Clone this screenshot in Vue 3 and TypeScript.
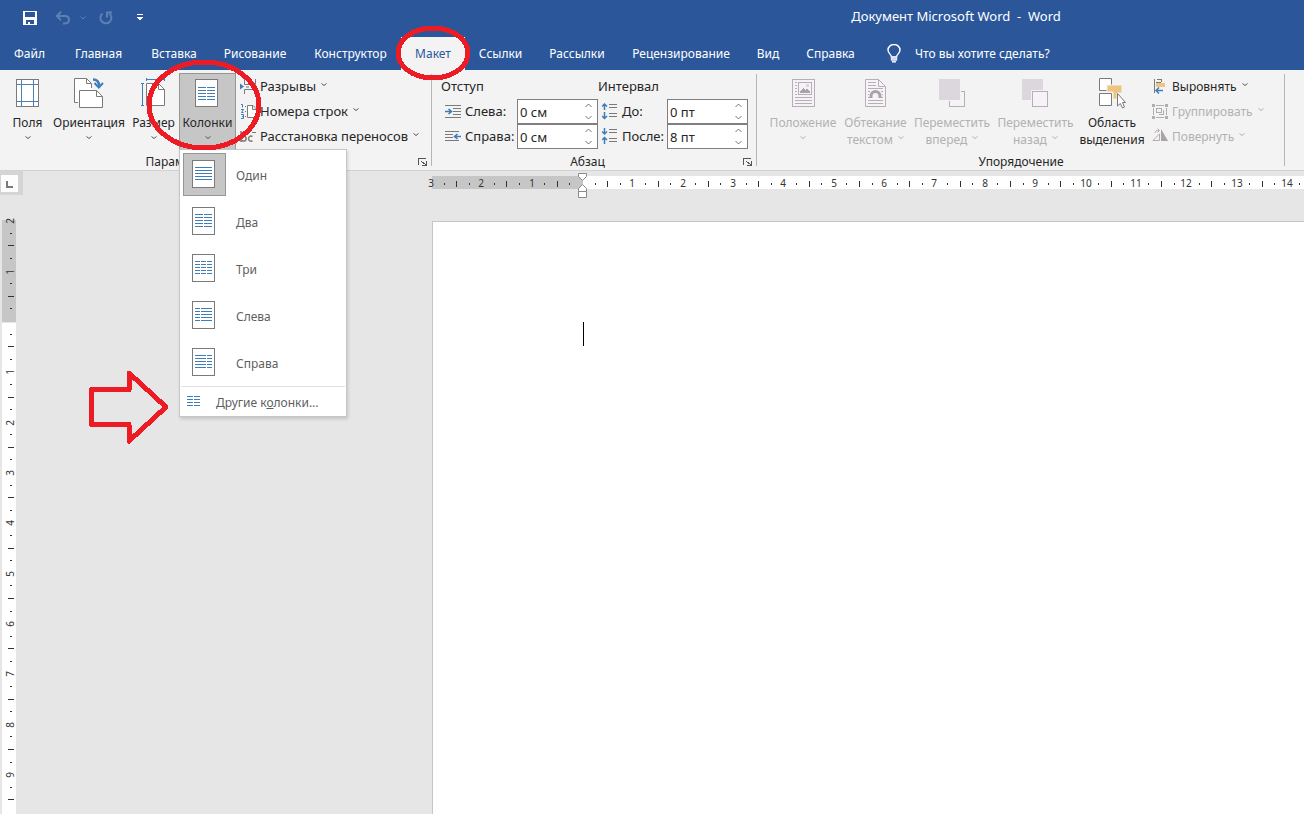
<script setup lang="ts">
import { ref } from 'vue'

interface ColumnOption {
  label: string
  spans: [number, number][]
}

const tabs: string[] = [
  'Файл', 'Главная', 'Вставка', 'Рисование', 'Конструктор', 'Макет',
  'Ссылки', 'Рассылки', 'Рецензирование', 'Вид', 'Справка',
]
const activeTab = ref('Макет')

const columnOptions: ColumnOption[] = [
  { label: 'Один', spans: [[3, 20]] },
  { label: 'Два', spans: [[3, 11], [12, 20]] },
  { label: 'Три', spans: [[3, 8], [9, 14], [15, 20]] },
  { label: 'Слева', spans: [[3, 8], [9, 20]] },
  { label: 'Справа', spans: [[3, 14], [15, 20]] },
]
const selectedColumns = ref('Один')

const indentLeft = ref('0 см')
const indentRight = ref('0 см')
const spaceBefore = ref('0 пт')
const spaceAfter = ref('8 пт')

function step(value: string, delta: number): string {
  const [amount, unit] = value.split(' ')
  return `${Math.max(0, Number(amount) + delta)} ${unit}`
}

function columnLines(spans: [number, number][], top: number): string {
  const rows = [0, 3, 6, 9, 12]
  return rows
    .map((r) => spans.map(([a, b]) => `M${a} ${top + r + 0.5}H${b}`).join(''))
    .join('')
}

// One centimetre on the rulers, in pixels
const CM = 50.35
// Where the text area begins, from the window's left and top edges
const ORIGIN_X = 582
const ORIGIN_Y = 322

interface Mark {
  pos: number
  kind: 'number' | 'half' | 'dot'
  text: string
}

function marks(from: number, length: number): Mark[] {
  const list: Mark[] = []
  for (let q = from * 4; (q / 4) * CM < length - 2; q++) {
    if (q === 0) continue
    const pos = Math.round((q / 4) * CM)
    const kind = q % 4 === 0 ? 'number' : q % 2 === 0 ? 'half' : 'dot'
    list.push({ pos, kind, text: String(Math.abs(q / 4)) })
  }
  return list
}

const horizontalMarks = marks(-3, window.innerWidth - ORIGIN_X)
const verticalMarks = marks(-2, window.innerHeight - ORIGIN_Y)
</script>

<template>
  <div class="word">
    <header class="titlebar">
      <div class="quick">
        <button type="button" class="q save" aria-label="Сохранить">
          <svg width="14" height="14" viewBox="0 0 14 14" shape-rendering="crispEdges">
            <path d="M0 0H14V14H0zM2 1V6H12V1zM3 9V13H5V11H7V13H11V9z" fill="#fff" fill-rule="evenodd" />
          </svg>
        </button>
        <button type="button" class="q undo" aria-label="Отменить">
          <svg width="16" height="14" viewBox="0 0 16 14" fill="none" stroke="#5d80b5" stroke-width="2">
            <path d="M2 5H10C13 5 14 7 14 9S12.500 12.500 9 12.500H8M6 .8L1.800 5L6 9.200" />
          </svg>
        </button>
        <button type="button" class="q more" aria-label="Список отмены">
          <svg width="6" height="4" viewBox="0 0 6 4" fill="none" stroke="#5d80b5"><path d="M.5 .5L3 3L5.500 .5" /></svg>
        </button>
        <button type="button" class="q redo" aria-label="Повторить">
          <svg width="14" height="14" viewBox="0 0 14 14" fill="none" stroke="#5d80b5" stroke-width="2">
            <path d="M3.500 2.500A5.500 5.500 0 1 0 10.500 2.700M8 6.500V1.500H13" />
          </svg>
        </button>
        <button type="button" class="q custom" aria-label="Настройка панели">
          <svg width="6" height="7" viewBox="0 0 6 7" shape-rendering="crispEdges">
            <path d="M0 0H6V1H0zM0 3H6V4H5V5H4V6H2V5H1V4H0z" fill="#fff" />
          </svg>
        </button>
      </div>
      <div class="title">Документ Microsoft Word&nbsp; -&nbsp; Word</div>
    </header>

    <nav class="tabs">
      <button
        v-for="tab in tabs"
        :key="tab"
        type="button"
        class="tab"
        :class="{ active: tab === activeTab }"
        @click="activeTab = tab"
      >{{ tab }}</button>
      <button type="button" class="tell">
        <svg width="14" height="19" viewBox="0 0 14 19" fill="none" stroke="#fff" stroke-width="1.400">
          <path d="M4.500 13C4.500 10.500 1 9.500 1 6A6 5.500 0 0 1 13 6C13 9.500 9.500 10.500 9.500 13z" />
          <path d="M4.500 13H9.500V16H4.500z" fill="#c9d5e8" stroke="#dfe7f2" />
          <path d="M5 17.800H9" />
        </svg>
        Что вы хотите сделать?
      </button>
    </nav>

    <section class="ribbon">
      <div class="group page-setup">
        <div class="body">
          <button type="button" class="big">
            <svg class="pic" width="23" height="30" viewBox="0 0 23 30" fill="none" shape-rendering="crispEdges">
              <path d="M.5 1.500H22.500V28.500H.5z" fill="#fff" stroke="#7a7a7a" />
              <path d="M5.500 2V28M17.500 2V28M1 6.500H22M1 23.500H22" stroke="#4a80b8" />
            </svg>
            <span>Поля</span><svg class="chev" viewBox="0 0 6 4"><path d="M.5 .5L3 2.500L5.500 .5" /></svg>
          </button>
          <button type="button" class="big">
            <svg class="pic" width="30" height="31" viewBox="0 0 30 31" fill="none" stroke="#7a7a7a">
              <path d="M4 24.500H.5V.5H12.500L17.500 5.500V12.500H5.500V24.500z" fill="#fff" stroke="none" />
              <path d="M4 24.500H.5V.5H12.500L17.500 5.500V10M12.500 .5V5.500H17.500" />
              <path d="M5.500 12.500H22.500L28.500 18.500V29.500H5.500z" fill="#fff" />
              <path d="M22.500 12.500V18.500H28.500" />
              <path d="M19 1.500C23 1.500 25 4 25 8" stroke="#3f7cba" stroke-width="2.500" />
              <path d="M20.500 5L24.800 9.500L29 5" stroke="#3f7cba" stroke-width="2" />
            </svg>
            <span>Ориентация</span><svg class="chev" viewBox="0 0 6 4"><path d="M.5 .5L3 2.500L5.500 .5" /></svg>
          </button>
          <button type="button" class="big size">
            <svg class="pic" width="25" height="30" viewBox="0 0 25 30" fill="none">
              <path d="M5.500 5.500H17.500L23.500 11.500V27.500H5.500z" fill="#fff" stroke="#7a7a7a" />
              <path d="M17.500 5.500V11.500H23.500" stroke="#7a7a7a" />
              <path d="M5.500 0V3M23.500 0V3M5 1.500H24M0 5.500H3M0 27.500H3M1.500 5V28" stroke="#3f7cba" />
            </svg>
            <span>Размер</span><svg class="chev" viewBox="0 0 6 4"><path d="M.5 .5L3 2.500L5.500 .5" /></svg>
          </button>
          <div class="drop">
            <button type="button" class="big open" aria-haspopup="true" aria-expanded="true">
              <svg class="pic" width="23" height="30" viewBox="0 0 23 30" fill="none" shape-rendering="crispEdges">
                <path d="M.5 1.500H22.500V28.500H.5z" fill="#fff" stroke="#7a7a7a" />
                <path :d="columnLines([[3, 11], [12, 20]], 9)" stroke="#3f7cba" />
              </svg>
              <span>Колонки</span><svg class="chev" viewBox="0 0 6 4"><path d="M.5 .5L3 2.500L5.500 .5" /></svg>
            </button>
            <div class="menu">
              <button
                v-for="option in columnOptions"
                :key="option.label"
                type="button"
                class="option"
                :class="{ selected: option.label === selectedColumns }"
                @click="selectedColumns = option.label"
              >
                <span class="thumb">
                  <svg width="23" height="28" viewBox="0 0 23 28" fill="none" shape-rendering="crispEdges">
                    <path d="M.5 .5H22.500V27.500H.5z" fill="#fff" stroke="#7a7a7a" />
                    <path :d="columnLines(option.spans, 7)" stroke="#3f7cba" />
                  </svg>
                </span>
                {{ option.label }}
              </button>
              <button type="button" class="option-more">
                <svg width="13" height="11" viewBox="0 0 13 11" shape-rendering="crispEdges" stroke="#3f7cba">
                  <path d="M0 .5H6M7 .5H13M0 3.500H6M7 3.500H13M0 6.500H6M7 6.500H13M0 9.500H6M7 9.500H13" />
                </svg>
                <span>Другие к<u>о</u>лонки...</span>
              </button>
            </div>
          </div>
          <div class="stack">
            <button type="button" class="small">
              <svg width="17" height="17" viewBox="0 0 17 17" fill="none" stroke="#7a7a7a">
                <path d="M4.500 1V6.500H15.500V1M4.500 16V11.500H15.500V16M6 9H9M11 9H14" />
                <path d="M0 5.500L4 8.500L0 11.500z" fill="#3f7cba" stroke="none" />
              </svg>
              Разрывы<svg class="chev" viewBox="0 0 6 4"><path d="M.5 .5L3 2.500L5.500 .5" /></svg>
            </button>
            <button type="button" class="small">
              <svg width="17" height="17" viewBox="0 0 17 17" fill="none">
                <path d="M1 1.500H2.500V4.500M1 6.500H3.500L1.500 9.500H3.500M1 11.500H3.500V15.500H1M2 13.500H3.500" stroke="#3f7cba" />
                <path d="M5 3.500H6M5 8.500H6M5 13.500H6" stroke="#7a7a7a" />
                <path d="M7.500 2.500H13L16.500 6V14.500H7.500zM12.500 2.500V6.500H16.500" fill="#fff" stroke="#7a7a7a" />
              </svg>
              Номера строк<svg class="chev" viewBox="0 0 6 4"><path d="M.5 .5L3 2.500L5.500 .5" /></svg>
            </button>
            <button type="button" class="small">
              <svg width="17" height="17" viewBox="0 0 17 17" fill="none" stroke="#7a7a7a">
                <path d="M1 3V14" stroke-width="1.500" />
                <circle cx="3.500" cy="10.500" r="2.600" stroke-width="1.500" />
                <path d="M12.500 8.500C10 7.300 8.500 9 8.500 10.700S10.500 14 12.500 12.700" stroke-width="1.500" />
                <path d="M12 4.500H16" />
              </svg>
              Расстановка переносов<svg class="chev" viewBox="0 0 6 4"><path d="M.5 .5L3 2.500L5.500 .5" /></svg>
            </button>
          </div>
        </div>
        <div class="caption">
          <span>Параметры страницы</span>
          <button type="button" class="launch" aria-label="Параметры страницы">
            <svg width="9" height="8" viewBox="0 0 9 8" fill="none" stroke="#555" shape-rendering="crispEdges">
              <path d="M.5 7V.5H8M8.500 3V7.500H4M3 3L8 7" />
            </svg>
          </button>
        </div>
      </div>

      <div class="group paragraph">
        <div class="body">
          <div class="fields left">
            <div class="heading">Отступ</div>
            <svg width="17" height="14" viewBox="0 0 17 14" fill="none" stroke="#7a7a7a">
              <path d="M0 .5H16M8 3.500H16M8 6.500H16M8 9.500H16M0 12.500H16" />
              <path d="M0 6.500H6M3.500 4L6.500 6.500L3.500 9" stroke="#3f7cba" stroke-width="1.600" />
            </svg>
            <label for="indent-left">Слева:</label>
            <div class="spin">
              <input id="indent-left" v-model="indentLeft" type="text" />
              <div class="arrows">
                <button type="button" aria-label="Больше" @click="indentLeft = step(indentLeft, 1)"><svg width="7" height="5" viewBox="0 0 7 5"><path d="M.5 4L3.500 1L6.500 4" /></svg></button>
                <button type="button" aria-label="Меньше" @click="indentLeft = step(indentLeft, -1)"><svg width="7" height="5" viewBox="0 0 7 5"><path d="M.5 1L3.500 4L6.500 1" /></svg></button>
              </div>
            </div>
            <svg width="17" height="14" viewBox="0 0 17 14" fill="none" stroke="#7a7a7a">
              <path d="M0 1.500H14M0 4.500H8M0 7.500H8M0 10.500H14" />
              <path d="M16 6.500H10M12.500 4L9.500 6.500L12.500 9" stroke="#3f7cba" stroke-width="1.600" />
            </svg>
            <label for="indent-right">Справа:</label>
            <div class="spin">
              <input id="indent-right" v-model="indentRight" type="text" />
              <div class="arrows">
                <button type="button" aria-label="Больше" @click="indentRight = step(indentRight, 1)"><svg width="7" height="5" viewBox="0 0 7 5"><path d="M.5 4L3.500 1L6.500 4" /></svg></button>
                <button type="button" aria-label="Меньше" @click="indentRight = step(indentRight, -1)"><svg width="7" height="5" viewBox="0 0 7 5"><path d="M.5 1L3.500 4L6.500 1" /></svg></button>
              </div>
            </div>
          </div>
          <div class="fields right">
            <div class="heading">Интервал</div>
            <svg width="17" height="17" viewBox="0 0 17 17" fill="none" stroke="#7a7a7a">
              <path d="M7 1.500H15M7 4.500H15M7 10.500H15M7 13.500H15" />
              <path d="M2.500 1V7M0 3.500L2.500 1L5 3.500M2.500 9V15.500M0 13L2.500 15.500L5 13" stroke="#3f7cba" stroke-width="1.500" />
            </svg>
            <label for="space-before">До:</label>
            <div class="spin">
              <input id="space-before" v-model="spaceBefore" type="text" />
              <div class="arrows">
                <button type="button" aria-label="Больше" @click="spaceBefore = step(spaceBefore, 1)"><svg width="7" height="5" viewBox="0 0 7 5"><path d="M.5 4L3.500 1L6.500 4" /></svg></button>
                <button type="button" aria-label="Меньше" @click="spaceBefore = step(spaceBefore, -1)"><svg width="7" height="5" viewBox="0 0 7 5"><path d="M.5 1L3.500 4L6.500 1" /></svg></button>
              </div>
            </div>
            <svg width="17" height="17" viewBox="0 0 17 17" fill="none" stroke="#7a7a7a">
              <path d="M7 1.500H15M7 4.500H15M7 10.500H15M7 13.500H15" />
              <path d="M2.500 0V6M0 3.500L2.500 6L5 3.500M2.500 9.500V16M0 12L2.500 9.500L5 12" stroke="#3f7cba" stroke-width="1.500" />
            </svg>
            <label for="space-after">После:</label>
            <div class="spin">
              <input id="space-after" v-model="spaceAfter" type="text" />
              <div class="arrows">
                <button type="button" aria-label="Больше" @click="spaceAfter = step(spaceAfter, 1)"><svg width="7" height="5" viewBox="0 0 7 5"><path d="M.5 4L3.500 1L6.500 4" /></svg></button>
                <button type="button" aria-label="Меньше" @click="spaceAfter = step(spaceAfter, -1)"><svg width="7" height="5" viewBox="0 0 7 5"><path d="M.5 1L3.500 4L6.500 1" /></svg></button>
              </div>
            </div>
          </div>
        </div>
        <div class="caption">
          <span>Абзац</span>
          <button type="button" class="launch" aria-label="Абзац">
            <svg width="9" height="8" viewBox="0 0 9 8" fill="none" stroke="#555" shape-rendering="crispEdges">
              <path d="M.5 7V.5H8M8.500 3V7.500H4M3 3L8 7" />
            </svg>
          </button>
        </div>
      </div>

      <div class="group arrange">
        <div class="body">
          <button type="button" class="big" disabled>
            <svg class="pic" width="23" height="30" viewBox="0 0 23 30" fill="none" stroke="#b4b0b4" shape-rendering="crispEdges">
              <path d="M.5 1.500H22.500V28.500H.5z" fill="#f7f1f8" />
              <path d="M6.500 4.500H19.500V16.500H6.500z" fill="#f7f1f8" />
              <path d="M3 4.500H5M3 7.500H5M3 10.500H5M3 13.500H5M3 16.500H5M3 19.500H20M3 22.500H20M3 25.500H20" />
              <path d="M8 15V13L11 10L13 12L15 11L18 14V15z" fill="#a7a3a7" stroke="none" />
              <path d="M14 6H17V9H14z" fill="#dcd7dc" stroke="none" />
            </svg>
            <span>Положение</span><svg class="chev" viewBox="0 0 6 4"><path d="M.5 .5L3 2.500L5.500 .5" /></svg>
          </button>
          <button type="button" class="big" disabled>
            <svg class="pic" width="21" height="30" viewBox="0 0 21 30" fill="none" stroke="#b4b0b4">
              <path d="M.5 1.500H13.500L20.500 8.500V28.500H.5z" fill="#f7f1f8" />
              <path d="M13.500 1.500V8.500H20.500M3 4.500H11M3 7.500H11M3 10.500H18M3 13.500H5M16 13.500H18M3 16.500H4M17 16.500H18M3 19.500H5M16 19.500H18M3 22.500H18M3 25.500H18" />
              <path d="M6 20V18A4.500 4.500 0 0 1 15 18V20" stroke="#a7a3a7" stroke-width="3" />
            </svg>
            <span>Обтекание<br />текстом <svg class="chev" viewBox="0 0 6 4"><path d="M.5 .5L3 2.500L5.500 .5" /></svg></span>
          </button>
          <button type="button" class="big" disabled>
            <svg class="pic" width="27" height="30" viewBox="0 0 27 30" fill="none" shape-rendering="crispEdges">
              <path d="M10.500 13.500H25.500V28.500H10.500z" fill="#f7f1f8" stroke="#b4b0b4" />
              <path d="M0 1H22V23H0z" fill="#f3f3f3" /><path d="M0 1H21V22H0z" fill="#dcd7dc" />
            </svg>
            <span>Переместить<br />вперед <svg class="chev" viewBox="0 0 6 4"><path d="M.5 .5L3 2.500L5.500 .5" /></svg></span>
          </button>
          <button type="button" class="big" disabled>
            <svg class="pic" width="27" height="30" viewBox="0 0 27 30" fill="none" shape-rendering="crispEdges">
              <path d="M0 1H21V22H0z" fill="#dcd7dc" />
              <path d="M9 12H27V30H9z" fill="#f3f3f3" />
              <path d="M10.500 13.500H25.500V28.500H10.500z" fill="#f7f1f8" stroke="#b4b0b4" />
            </svg>
            <span>Переместить<br />назад <svg class="chev" viewBox="0 0 6 4"><path d="M.5 .5L3 2.500L5.500 .5" /></svg></span>
          </button>
          <button type="button" class="big">
            <svg class="pic" width="27" height="31" viewBox="0 0 27 31" fill="none" stroke="#7a7a7a">
              <path d="M.5 .5H12.500V12.500H.5zM.5 15.500H12.500V27.500H.5z" fill="#fff" />
              <path d="M8 7H23V15H18V21H14V14H8z" fill="#edc57e" stroke="#f3f3f3" />
              <path d="M18.500 15.500V28L21.300 25.500L23.500 30L25.500 29L23.500 24.500H26.500z" fill="#fff" />
            </svg>
            <span>Область<br />выделения</span>
          </button>
          <div class="stack">
            <button type="button" class="small">
              <svg width="17" height="17" viewBox="0 0 17 17" fill="none" shape-rendering="crispEdges">
                <path d="M2.500 1V15M4.500 1.500H9.500V4" stroke="#7a7a7a" />
                <path d="M4 4.500H9" stroke="#7a7a7a" /><path d="M4 5H13V9H4z" fill="#edc57e" />
                <path d="M4 12.500H11M7 9.500L4 12.500L7 15.500" stroke="#3f7cba" stroke-width="1.500" shape-rendering="auto" />
              </svg>
              Выровнять<svg class="chev" viewBox="0 0 6 4"><path d="M.5 .5L3 2.500L5.500 .5" /></svg>
            </button>
            <button type="button" class="small" disabled>
              <svg width="17" height="17" viewBox="0 0 17 17" fill="none" stroke="#b1adb1" shape-rendering="crispEdges">
                <path d="M0 1H3V4H0zM13 1H16V4H13zM0 13H3V16H0zM13 13H16V16H13z" fill="#b1adb1" stroke="none" />
                <path d="M4 2.500H12M4 14.500H12M1.500 5V12M14.500 5V12M4.500 5.500H9.500V9.500H4.500zM7 11.500H11.500V7" />
              </svg>
              Группировать<svg class="chev" viewBox="0 0 6 4"><path d="M.5 .5L3 2.500L5.500 .5" /></svg>
            </button>
            <button type="button" class="small" disabled>
              <svg width="17" height="17" viewBox="0 0 17 17" fill="none" stroke="#b1adb1">
                <path d="M.8 12.500H7.500V6z" /><path d="M9 1V13H16z" fill="#a7a3a7" stroke="none" />
                <path d="M3 5C3 3 4.500 2.500 7 2.500M5.500 .5L7.500 2.500L5.500 4.500" />
              </svg>
              Повернуть<svg class="chev" viewBox="0 0 6 4"><path d="M.5 .5L3 2.500L5.500 .5" /></svg>
            </button>
          </div>
        </div>
        <div class="caption"><span>Упорядочение</span></div>
      </div>
    </section>

    <div class="ruler-row">
      <button type="button" class="corner" aria-label="Тип табуляции">
        <svg width="17" height="17" viewBox="0 0 17 17" shape-rendering="crispEdges">
          <path d="M0 0H17V17H0z" fill="#fdfdfd" /><path d="M5 6H7V11H12V13H5z" fill="#7a7a7a" />
        </svg>
      </button>
      <svg class="h-ruler" height="27" aria-hidden="true">
        <rect x="2" y="5" width="151" height="13" fill="#c6c6c6" />
        <rect x="153" y="5" width="100%" height="13" fill="#fff" />
        <g transform="translate(152 0)">
          <template v-for="m in horizontalMarks" :key="m.pos">
            <text v-if="m.kind === 'number'" :x="m.pos" y="16">{{ m.text }}</text>
            <rect v-else-if="m.kind === 'half'" :x="m.pos" y="10" width="1" height="6" />
            <rect v-else :x="m.pos" y="12" width="1" height="2" />
          </template>
          <path d="M-3.500 2.500H4.500V5.500L.5 9.500L-3.500 5.500zM-3.500 20.500V17.500L.5 13.500L4.500 17.500V20.500zM-3.500 20.500H4.500V26.500H-3.500z" fill="#fff" stroke="#8a8a8a" />
        </g>
      </svg>
    </div>

    <main class="workspace">
      <svg class="v-ruler" width="14" aria-hidden="true">
        <rect width="14" height="102" fill="#c6c6c6" />
        <rect y="103" width="14" height="100%" fill="#fff" />
        <g transform="translate(0 102)">
          <template v-for="m in verticalMarks" :key="m.pos">
            <text v-if="m.kind === 'number'" :transform="`translate(12 ${m.pos}) rotate(-90)`">{{ m.text }}</text>
            <rect v-else-if="m.kind === 'half'" x="6" :y="m.pos - 1" width="6" height="1" />
            <rect v-else x="8" :y="m.pos - 1" width="2" height="1" />
          </template>
        </g>
      </svg>
      <article class="page"><span class="caret"></span></article>
    </main>

    <svg class="pen" width="480" height="450" fill="none" stroke="#ed1c24" stroke-width="5" stroke-linejoin="round" shape-rendering="crispEdges" aria-hidden="true">
      <ellipse cx="433" cy="53" rx="35" ry="25" />
      <ellipse cx="204" cy="105" rx="55" ry="43" />
      <path d="M91.500 389.500H129V373L166 407L129 441V424.500H91.500z" />
    </svg>
  </div>
</template>

<style>
body {
  margin: 0;
}
</style>

<style scoped>
.word {
  position: relative;
  display: flex;
  flex-direction: column;
  height: 100vh;
  overflow: hidden;
  background: #e6e6e6;
  color: #262626;
  font: 13px/17px "Noto Sans", "Open Sans", sans-serif;
}
button {
  margin: 0;
  padding: 0;
  border: 0;
  background: none;
  color: inherit;
  font: inherit;
  white-space: nowrap;
}
svg {
  flex: none;
}

.titlebar {
  display: grid;
  grid-template-columns: 608px 1fr;
  align-items: center;
  height: 35px;
  flex: none;
  background: #2b579a;
  color: #fff;
}
.quick {
  display: flex;
  align-items: center;
  padding-left: 23px;
}
.q {
  display: flex;
}
.undo {
  margin-left: 18px;
}
.more {
  margin-left: 9px;
}
.redo {
  margin-left: 13px;
}
.custom {
  margin-left: 24px;
}
.title {
  padding-bottom: 2px;
  text-align: center;
}

.tabs {
  display: grid;
  grid-template-columns: 59px 79px 72px 90px 101px 64px 71px 82px 126px 48px 77px 1fr;
  align-items: end;
  height: 35px;
  flex: none;
  background: #2b579a;
  color: #fff;
  font-size: 12px;
}
.tab {
  height: 33px;
  display: flex;
  align-items: center;
  justify-content: center;
}
.tab.active {
  background: #f3f3f3;
  color: #2b579a;
}
.tell {
  display: flex;
  align-items: center;
  gap: 14px;
  height: 33px;
  padding-left: 18px;
}

.ribbon {
  display: flex;
  height: 100px;
  flex: none;
  background: #f3f3f3;
  border-bottom: 1px solid #d2d2d2;
}
.group {
  position: relative;
  flex: none;
  display: flex;
  flex-direction: column;
}
.group::after {
  content: "";
  position: absolute;
  top: 4px;
  right: 0;
  bottom: 4px;
  width: 1px;
  background: #b5b5b5;
}
.page-setup {
  width: 432px;
}
.paragraph {
  width: 325px;
}
.arrange {
  width: 528px;
}
.body {
  display: grid;
  height: 77px;
  padding-top: 3px;
}
.page-setup .body {
  grid-template-columns: 55px 68px 56px 57px 1fr;
}
.paragraph .body {
  grid-template-columns: 157px 150px;
  padding-left: 9px;
}
.arrange .body {
  grid-template-columns: 76px 69px 84px 83px 70px 1fr;
  padding-left: 8px;
}
.caption {
  display: flex;
  align-items: center;
  padding: 3px 5px 0 0;
  font-size: 12px;
}
.arrange .caption {
  padding-right: 0;
}
.caption span {
  flex: 1;
  text-align: center;
}
.launch {
  display: flex;
}
.big {
  box-sizing: border-box;
  display: flex;
  flex-direction: column;
  align-items: center;
  justify-content: space-between;
  width: 100%;
  height: 77px;
  padding: 5px 0 2px;
  font-size: 12px;
}
.big.size {
  padding-left: 5px;
}
.pic {
  margin-bottom: auto;
}
.big > span {
  text-align: center;
}
.chev {
  width: 6px;
  height: 4px;
  fill: none;
  stroke: #555;
}
.big > .chev {
  margin: 5px 0 8px;
}
.big > span .chev {
  margin: 0 0 4px 2px;
  vertical-align: baseline;
}
button:disabled {
  color: #b1b1b1;
}
button:disabled .chev {
  stroke: #b1b1b1;
}
.drop {
  position: relative;
}
.big.open {
  background: #c6c6c6;
  box-shadow: inset 0 0 0 1px #969696;
}
.big.open .pic {
  margin-right: 2px;
}
.stack {
  display: flex;
  flex-direction: column;
  padding: 1px 0 0 4px;
}
.arrange .stack {
  padding-left: 5px;
}
.small {
  display: flex;
  align-items: center;
  height: 25px;
  gap: 3px;
}
.arrange .small {
  font-size: 12px;
}
.small .chev {
  margin: 0 0 4px 2px;
}

.fields {
  display: grid;
  grid-template-rows: 25px 25px 25px;
  align-items: center;
  padding-top: 1px;
}
.fields.left {
  grid-template-columns: 24px 52px 81px;
}
.fields.right {
  grid-template-columns: 24px 45px 81px;
}
.heading {
  grid-column: 1 / -1;
}
.fields > svg {
  justify-self: center;
}
.spin {
  display: flex;
  box-sizing: border-box;
  height: 25px;
  border: 1px solid #7f7f7f;
  background: #fff;
}
.spin input {
  flex: 1;
  min-width: 0;
  padding: 2px 0 0 2px;
  border: 0;
  outline: 0;
  background: none;
  color: inherit;
  font: inherit;
}
.arrows {
  display: flex;
  flex-direction: column;
  width: 18px;
}
.arrows button {
  flex: 1;
  display: flex;
  align-items: center;
  justify-content: center;
}
.arrows svg {
  fill: none;
  stroke: #777;
}

.menu {
  position: absolute;
  z-index: 2;
  top: 76px;
  left: 0;
  box-sizing: border-box;
  width: 168px;
  padding: 3px 1px 0;
  border: 1px solid #c6c6c6;
  background: #fff;
  box-shadow: 1px 2px 3px rgba(0, 0, 0, 0.15);
  color: #5f5f5f;
  font-size: 12px;
}
.option {
  display: flex;
  align-items: flex-start;
  width: 100%;
  gap: 10px;
  height: 47px;
  padding-left: 2px;
  line-height: 45px;
}
.option:nth-last-child(2) {
  height: 45px;
}
.thumb {
  box-sizing: border-box;
  width: 43px;
  height: 43px;
  padding: 6px 0 0 8px;
  border: 1px solid transparent;
}
.thumb svg {
  display: block;
}
.selected .thumb {
  border-color: #969696;
  background: #c6c6c6;
}
.option-more {
  display: flex;
  align-items: center;
  width: 100%;
  height: 30px;
  gap: 16px;
  padding: 2px 0 0 6px;
  border-top: 1px solid #e1e1e1;
}
.option-more svg {
  margin-bottom: 2px;
}

.ruler-row {
  display: flex;
  align-items: flex-start;
  height: 49px;
  flex: none;
}
.corner {
  display: flex;
  flex: none;
  padding: 4px 5px 3px 1px;
  background: #d5d5d5;
}
.h-ruler {
  flex: 1;
  min-width: 0;
  margin-left: 407px;
  overflow: visible;
}
.h-ruler text,
.v-ruler text {
  fill: #333;
  font-size: 10px;
  text-anchor: middle;
}
.h-ruler rect[width="1"],
.v-ruler rect[height="1"] {
  fill: #333;
}
.workspace {
  display: flex;
  flex: 1;
  min-height: 0;
}
.v-ruler {
  height: 100%;
  margin-left: 2px;
  overflow: visible;
}
.page {
  flex: 1;
  margin: 1px 0 0 416px;
  border: solid #c6c6c6;
  border-width: 1px 0 0 1px;
  background: #fff;
}
.caret {
  display: block;
  width: 1px;
  height: 24px;
  margin: 100px 0 0 150px;
  background: #000;
}
.pen {
  position: absolute;
  z-index: 3;
  top: 0;
  left: 0;
  pointer-events: none;
}
</style>
